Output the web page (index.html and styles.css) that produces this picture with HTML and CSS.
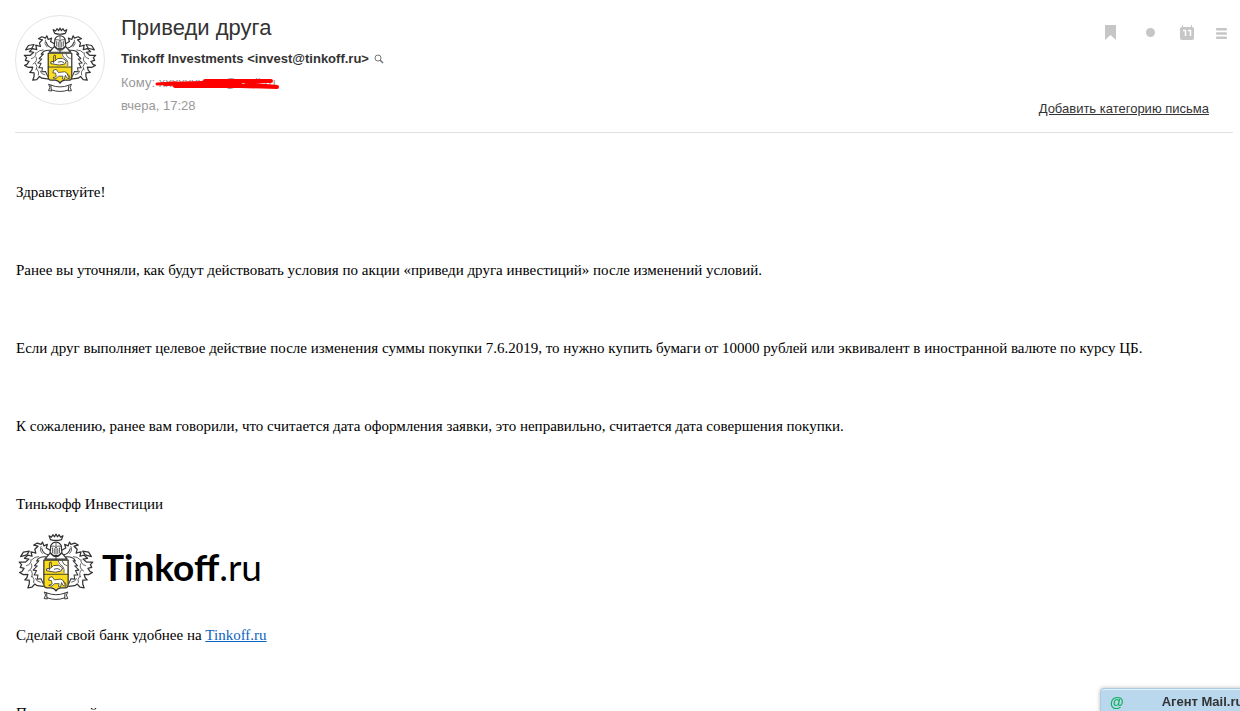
FILE: index.html
```html
<!DOCTYPE html>
<html lang="ru">
<head>
    <meta charset="UTF-8">
    <meta name="viewport" content="width=device-width, initial-scale=1.0">
    <title>Приведи друга</title>
    <link rel="stylesheet" href="styles.css">
</head>
<body>

    <!-- Crest, used by the avatar and the signature -->
    <svg class="defs" width="0" height="0" aria-hidden="true">
        <symbol id="crest" viewBox="73 83 218 196">
            <g fill="none" stroke="#333" stroke-width="3.6" stroke-linejoin="round" stroke-linecap="round">
                <g id="mantle">
                    <path d="M164 132 L154 126 L157 116 L147 120 L143 109 L139 116 L128 112 L118 118 L130 121 L121 130 L124 141 L110 137 L113 150 L101 147 L91 156 L104 158 L94 167 L76 167 L83 174 L79 182 L90 185 L84 194 L77 197 L88 203 L101 202 L98 212 L92 218 L105 219 L105 230 L101 241 L113 239 L121 230 L128 235 L145 237"/>
                    <path d="M80 151 L88 138 L105 135 L98 146 Z"/>
                    <path d="M160 146 Q145 143 141 128 M155 152 Q132 150 126 164 L133 163 L120 177 L128 178 L116 190 L126 191 L119 204 L130 204 L128 216 L139 215 L145 229" stroke-width="3"/>
                    <path d="M139 122 Q133 133 143 142 M112 160 Q120 151 132 151 M97 177 Q112 173 110 160 M102 193 Q117 185 111 172 M111 210 Q118 200 109 190 M118 226 Q122 217 113 207 M137 225 Q126 224 123 214" stroke-width="2.2"/>
                </g>
                <use href="#mantle" transform="translate(364 0) scale(-1 1)"/>
                <path d="M166 102 L162 91 L169 95 L173 88 L178 94 L182 86 L186 94 L191 88 L195 95 L202 91 L198 102 Q182 107 166 102 Z" fill="#fff"/>
                <path d="M167 119 Q172 109 182 109 Q192 109 197 119 L199 139 L190 148 H174 L165 139 Z" fill="#fff"/>
                <path d="M168 121 H178 L182 126 L186 121 H196 M182 111 V145 M172 126 V140 M177 128 V143 M187 128 V143 M192 126 V140" stroke-width="2.2"/>
                <path d="M165 141 L150 158 H214 L199 141 L190 149 H174 Z" fill="#fff"/>
                <path d="M176 151 H188 M182 151 V158" stroke-width="3"/>
                <path d="M147 161 H217 V233 Q217 239 210 240 H194 Q184 241 182 249 Q180 241 170 240 H155 Q147 239 147 233 Z" fill="#fbdc1c" stroke="none"/>
                <path d="M186 162 H215 V200 H202 Q207 183 190 176 Z" fill="#fff" stroke="none"/>
                <path d="M188 163 Q190 174 202 180 Q207 187 205 198 M200 164 L205 173 L213 177" stroke-width="2.2"/>
                <path d="M156 186 L167 184 L175 177 L190 176 L201 184 L196 193 L180 196 L156 192 Z" fill="#fff" stroke-width="2.4"/>
                <path d="M163 189 V170 Q163 166 168 167 L169 179 M177 187 Q187 183 193 188" stroke-width="2.4"/>
                <path d="M147 202 H217" stroke-width="2.6"/>
                <path d="M161 218 L163 211 L171 209 L177 218 L196 216 Q204 218 205 226 L210 237 L202 234 L198 226 L195 238 L189 237 L191 229 H178 L170 236 L161 234 L171 230 L169 221 Z" fill="#fff" stroke-width="2.2"/>
                <path d="M205 223 Q211 225 212 234" stroke-width="2"/>
                <path d="M147 161 H217 V233 Q217 240 210 241 H196 Q185 243 182 250 Q179 243 168 241 H155 Q147 240 147 233 Z"/>
                <path d="M156 256 L148 253 L152 262 L148 272 L157 273 L157 268 M208 256 L216 253 L212 262 L216 272 L207 273 L207 268" fill="#fff" stroke-width="2.8"/>
                <path d="M156 256 Q182 266 208 256 L207 270 Q182 279 157 270 Z" fill="#fff" stroke-width="2.8"/>
            </g>
        </symbol>
    </svg>

    <header class="letter-head">
        <div class="avatar"><svg class="avatar-crest"><use href="#crest"/></svg></div>
        <div class="letter-info">
            <h1>Приведи друга</h1>
            <div class="from">
                <b>Tinkoff Investments &lt;invest@tinkoff.ru&gt;</b>
                <button class="icon-btn" type="button" aria-label="Найти письма">
                    <svg width="10" height="10" viewBox="0 0 10 10" fill="none" stroke="#777">
                        <circle cx="4" cy="4" r="3"/><path d="M6 6 L9 9" stroke-width="1.6"/>
                    </svg>
                </button>
            </div>
            <div class="meta">Кому: <span class="hidden-mail">xxxxxxxxxx@mail.ru
                <svg class="scribble" viewBox="0 0 124 12" fill="none" stroke="#f00" stroke-linecap="round" stroke-linejoin="round">
                    <path d="M2 6 L20 5" stroke-width="3"/>
                    <path d="M10 6 L48 5 L85 5" stroke-width="4"/>
                    <path d="M50 3 L116 3" stroke-width="4"/>
                    <path d="M20 8 L88 8 L98 5" stroke-width="4"/>
                    <path d="M86 8 L122 9 M100 7 L122 9" stroke-width="4"/>
                </svg></span>
            </div>
            <div class="meta">вчера, 17:28</div>
        </div>
        <div class="letter-side">
            <div class="tools">
                <button class="icon-btn" type="button" aria-label="Закладка">
                    <svg width="11" height="15" viewBox="0 0 11 15" fill="#c6c6c6"><path d="M0 0 H11 V15 L5.5 10 L0 15 Z"/></svg>
                </button>
                <button class="icon-btn unread" type="button" aria-label="Пометить непрочитанным">
                    <svg width="9" height="9" viewBox="0 0 9 9" fill="#c6c6c6"><circle cx="4.5" cy="4.5" r="4.5"/></svg>
                </button>
                <button class="icon-btn" type="button" aria-label="Календарь">
                    <svg width="14" height="15" viewBox="0 0 14 15" fill="#c6c6c6">
                        <path d="M2 0 H3 V2 H11 V0 H12 V2 Q14 2 14 4 V13 Q14 15 12 15 H2 Q0 15 0 13 V4 Q0 2 2 2 Z"/>
                        <path d="M3 5.5 H5.5 V11 M8 5.5 H10.5 V11" fill="none" stroke="#fff" stroke-width="1.5"/>
                    </svg>
                </button>
                <button class="icon-btn" type="button" aria-label="Меню">
                    <svg width="11" height="13" viewBox="0 0 11 13" fill="#c6c6c6">
                        <rect y="2" width="11" height="2.6" rx="1"/><rect y="6.2" width="11" height="2.6" rx="1"/><rect y="10.4" width="11" height="2.6" rx="1"/>
                    </svg>
                </button>
            </div>
            <a class="category" href="#">Добавить категорию письма</a>
        </div>
    </header>

    <main class="letter-body">
        <p>Здравствуйте!</p>
        <p>Ранее вы уточняли, как будут действовать условия по акции «приведи друга инвестиций» после изменений условий.</p>
        <p>Если друг выполняет целевое действие после изменения суммы покупки 7.6.2019, то нужно купить бумаги от 10000 рублей или эквивалент в иностранной валюте по курсу ЦБ.</p>
        <p>К сожалению, ранее вам говорили, что считается дата оформления заявки, это неправильно, считается дата совершения покупки.</p>
        <p class="sign">Тинькофф Инвестиции</p>
        <div class="logo">
            <svg class="logo-crest"><use href="#crest"/></svg>
            <span class="logo-text"><b>Tinkoff</b>.ru</span>
        </div>
        <p>Сделай свой банк удобнее на <a href="#">Tinkoff.ru</a></p>
        <p>Полученный</p>
    </main>

    <!-- Agent bar -->
    <button class="agent" type="button"><span class="agent-at">@</span><span>Агент Mail.ru</span></button>

</body>
</html>
```
FILE: styles.css
```css
* {
    box-sizing: border-box;
}
body {
    margin: 0;
    height: 100vh;
    overflow: hidden;
    background: #fff;
    color: #000;
    font-family: "Liberation Sans", Arial, sans-serif;
    font-size: 13px;
}
.defs {
    position: absolute;
}
.letter-head {
    display: flex;
    margin: 0 7px 0 15px;
    padding: 15px 0 7px;
    border-bottom: 1px solid #e0e0e0;
}
.avatar {
    display: flex;
    align-items: center;
    justify-content: center;
    width: 90px;
    height: 90px;
    margin-right: 16px;
    border: 1px solid #e4e4e4;
    border-radius: 50%;
}
.avatar-crest {
    width: 74px;
    height: 66px;
}
.letter-info {
    flex: 1;
}
h1 {
    margin: 0 0 11px;
    color: #333;
    font-size: 22px;
    font-weight: normal;
    line-height: 25px;
}
.from {
    display: flex;
    align-items: center;
    gap: 5px;
    margin-bottom: 8px;
    color: #333;
    line-height: 16px;
}
.meta {
    margin-bottom: 7px;
    color: #999;
    line-height: 16px;
}
.meta:last-child {
    margin-bottom: 11px;
}
.hidden-mail {
    position: relative;
}
.scribble {
    position: absolute;
    left: -4px;
    top: 3px;
    width: 124px;
    height: 12px;
}
.icon-btn {
    display: flex;
    padding: 0;
    border: 0;
    background: none;
    cursor: pointer;
}
.letter-side {
    display: flex;
    flex-direction: column;
    justify-content: space-between;
    align-items: flex-end;
}
.tools {
    display: flex;
    align-items: center;
    gap: 22px;
    margin: 10px 6px 0 0;
}
.unread {
    padding: 0 3px 0 8px;
}
.category {
    margin: 0 24px 8px 0;
    color: #333;
    line-height: 16px;
}
.letter-body {
    padding: 50px 16px 0;
    font-family: "Liberation Serif", "Times New Roman", serif;
    font-size: 15px;
    line-height: 18px;
}
.letter-body p {
    margin: 0 0 60px;
}
.letter-body a {
    color: #0b63c4;
}
.letter-body .sign {
    margin-bottom: 20px;
}
.logo {
    display: flex;
    align-items: center;
    gap: 8px;
    height: 68px;
    margin: 0 0 25px 2px;
}
.logo-crest {
    width: 76px;
    height: 68px;
}
.logo-text {
    font-family: Lato, sans-serif;
    font-size: 37px;
    line-height: 46px;
}
.agent {
    position: fixed;
    right: -8px;
    bottom: -4px;
    display: flex;
    align-items: center;
    gap: 38px;
    width: 148px;
    height: 27px;
    padding: 0 0 0 9px;
    border: 1px solid #a9cbe2;
    border-radius: 4px;
    background: #b9d8ee;
    box-shadow: 0 0 4px #bbb, inset 0 1px 0 #e4f2fb;
    color: #333;
    font-family: "Liberation Sans", Arial, sans-serif;
    font-size: 13px;
    font-weight: bold;
    white-space: nowrap;
}
.agent-at {
    color: #0fae58;
    font-size: 14px;
}
```
